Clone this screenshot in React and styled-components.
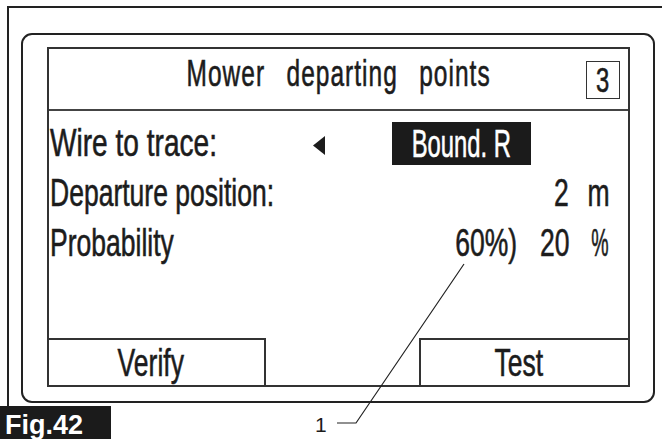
import React from "react";
import styled, { createGlobalStyle } from "styled-components";

const GlobalStyle = createGlobalStyle`
  html, body { margin: 0; padding: 0; background: #fff; }
  body {
    width: 662px; height: 439px; overflow: hidden;
    font-family: "Liberation Sans", Arial, sans-serif;
    color: #1c1c1c;
  }
`;

const SX = 0.68;

const Page = styled.div`
  position: relative;
  width: 662px;
  height: 439px;
  box-sizing: border-box;
  padding-top: 6px;
  display: flex;
  flex-direction: column;
  overflow: hidden;
`;

const Frame = styled.div`
  margin-left: 7px;
  height: 400px;
  box-sizing: border-box;
  border-top: 2px solid #222;
  border-left: 2px solid #222;
  padding: 25px 0 0 12px;
`;

const Panel = styled.div`
  width: 634px;
  height: 370px;
  box-sizing: border-box;
  border: 2px solid #222;
  border-radius: 11px;
  padding: 12px 23px 14px 24px;
`;

const Screen = styled.div`
  width: 583px;
  height: 340px;
  box-sizing: border-box;
  border: 2px solid #333;
  display: flex;
  flex-direction: column;
`;

const TitleBar = styled.div`
  height: 62px;
  box-sizing: border-box;
  border-bottom: 2px solid #444;
  display: grid;
  grid-template-columns: 1fr auto 1fr;
  align-items: center;
`;

const Cond = styled.span`
  display: inline-block;
  white-space: pre;
  -webkit-text-stroke: 0.6px currentColor;
  transform: scaleX(${(p) => p.$sx || SX});
  transform-origin: ${(p) => p.$origin || "left"} center;
`;

const Title = styled(Cond)`
  grid-column: 2;
  font-size: 36px;
  line-height: 36px;
  letter-spacing: 1.5px;
  word-spacing: 20px;
  margin-bottom: 10px;
`;

const PageNo = styled.div`
  grid-column: 3;
  justify-self: end;
  margin: 2px 8px 0 0;
  width: 34px;
  height: 38px;
  box-sizing: border-box;
  border: 1px solid #333;
  display: flex;
  align-items: center;
  justify-content: center;
  font-size: 35px;
  line-height: 36px;
`;

const Body = styled.div`
  flex: 1;
  padding-top: 7px;
  display: flex;
  flex-direction: column;
`;

const Row = styled.div`
  height: 50px;
  display: flex;
  align-items: center;
  padding-left: 1px;
  font-size: 39px;
  line-height: 50px;
`;

const Label = styled.div`
  flex: 1;
  min-width: 0;
`;

const Arrow = styled.svg`
  display: block;
  width: 12px;
  height: 19px;
  margin: 5px 67px 0 0;
  fill: #1c1c1c;
`;

const Selected = styled.div`
  width: 139px;
  height: 43px;
  margin-right: 97px;
  background: #1b1b1b;
  color: #fff;
  display: flex;
  justify-content: center;
  line-height: 43px;
`;

const Value = styled.div`
  display: flex;
  justify-content: flex-end;
  margin-right: ${(p) => p.$gap || 0}px;
`;

const Unit = styled.div`
  width: 40px;
  margin-right: 19px;
  display: flex;
  justify-content: flex-end;
`;

const ButtonBar = styled.div`
  height: 47px;
  display: flex;
  justify-content: space-between;
`;

const SoftKey = styled.div`
  width: ${(p) => p.$w}px;
  box-sizing: border-box;
  border-top: 2px solid #333;
  ${(p) => (p.$side === "right" ? "border-right: 2px solid #333;" : "border-left: 2px solid #333;")}
  display: flex;
  justify-content: center;
  padding-right: 11px;
  font-size: 39px;
  line-height: 45px;
`;

const Fig = styled.div`
  width: 111px;
  height: 33px;
  box-sizing: border-box;
  background: #1b1b1b;
  color: #fff;
  font-weight: bold;
  font-size: 27px;
  line-height: 28px;
  padding: 5px 0 0 5px;
`;

const Leader = styled.svg`
  position: absolute;
  left: 0;
  top: 0;
  width: 662px;
  height: 439px;
  pointer-events: none;
`;

const Callout = styled.div`
  position: absolute;
  left: 315px;
  top: 414px;
  font-size: 21px;
  line-height: 21px;
  color: #1c1c1c;
`;

export default function App() {
  return (
    <>
      <GlobalStyle />
      <Page>
        <Frame>
          <Panel>
            <Screen>
              <TitleBar>
                <Title $origin="center">Mower departing points</Title>
                <PageNo>
                  <Cond $origin="center">3</Cond>
                </PageNo>
              </TitleBar>
              <Body>
                <Row>
                  <Label>
                    <Cond $sx={0.72}>Wire to trace:</Cond>
                  </Label>
                  <Arrow viewBox="0 0 12 19">
                    <polygon points="12,0 0,9.5 12,19" />
                  </Arrow>
                  <Selected>
                    <Cond $origin="center" $sx={0.61}>Bound. R</Cond>
                  </Selected>
                </Row>
                <Row>
                  <Label>
                    <Cond>Departure position:</Cond>
                  </Label>
                  <Value>
                    <Cond $origin="right">2</Cond>
                  </Value>
                  <Unit>
                    <Cond $origin="right">m</Cond>
                  </Unit>
                </Row>
                <Row>
                  <Label>
                    <Cond>Probability</Cond>
                  </Label>
                  <Value $gap={9}>
                    <Cond $origin="right">60%)</Cond>
                  </Value>
                  <Value>
                    <Cond $origin="right">20</Cond>
                  </Value>
                  <Unit>
                    <Cond $origin="right" $sx={0.5}>%</Cond>
                  </Unit>
                </Row>
              </Body>
              <ButtonBar>
                <SoftKey $w={217} $side="right">
                  <Cond $origin="center">Verify</Cond>
                </SoftKey>
                <SoftKey $w={209} $side="left">
                  <Cond $origin="center">Test</Cond>
                </SoftKey>
              </ButtonBar>
            </Screen>
          </Panel>
        </Frame>
        <Fig>Fig.42</Fig>
        <Leader viewBox="0 0 662 439">
          <polyline
            points="464,264 356,423 337,423"
            fill="none"
            stroke="#222"
            strokeWidth="1.2"
          />
        </Leader>
        <Callout>1</Callout>
      </Page>
    </>
  );
}
